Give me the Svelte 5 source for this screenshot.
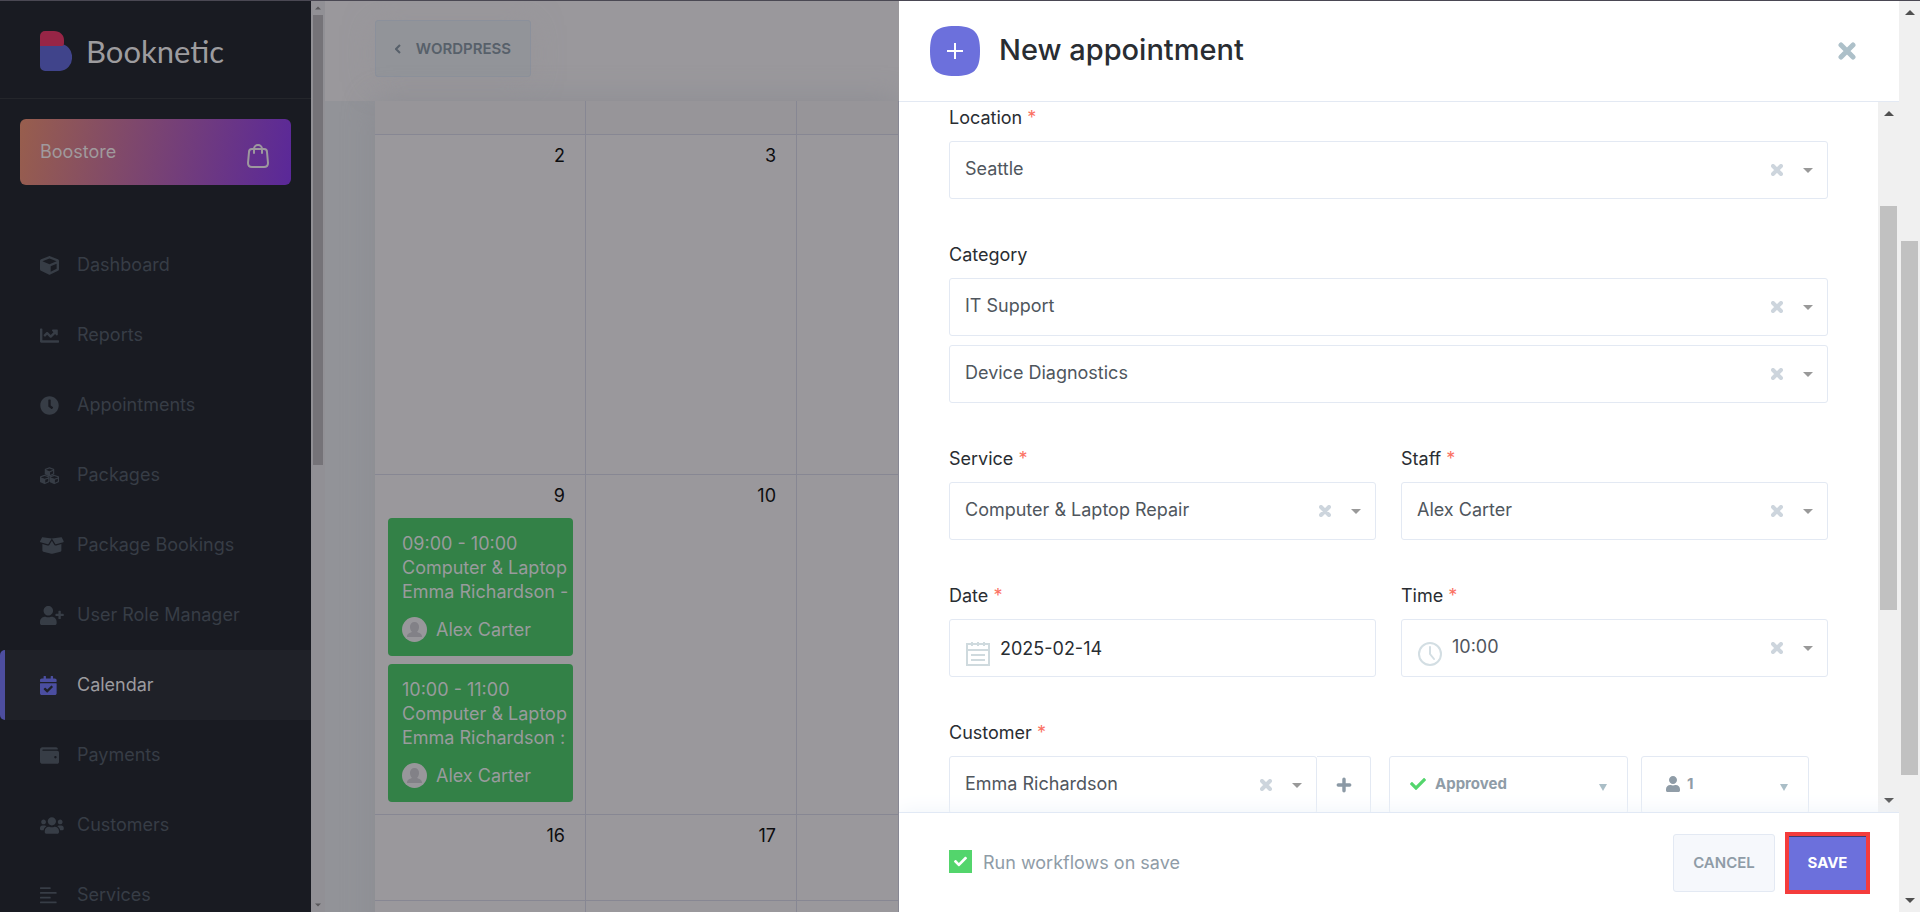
<script lang="ts">
  const cube =
    "M239.1 6.3l-208 78c-18.7 7-31.1 25-31.1 45v225.1c0 18.2 10.3 34.8 26.5 42.9l208 104c13.5 6.8 29.4 6.8 42.9 0l208-104c16.3-8.1 26.5-24.8 26.5-42.9V129.3c0-20-12.4-37.9-31.1-44.9l-208-78C262 2.2 250 2.2 239.1 6.3zM256 68.4l192 72v1.1l-192 78-192-78v-1.1l192-72zm32 356V275.5l160-65v133.9l-160 80z";
  const check =
    "M173.898 439.404l-166.4-166.4c-9.997-9.997-9.997-26.206 0-36.204l36.203-36.204c9.997-9.998 26.207-9.998 36.204 0L192 312.69 432.095 72.596c9.997-9.997 26.207-9.997 36.204 0l36.203 36.204c9.997 9.997 9.997 26.206 0 36.204l-294.4 294.401c-9.998 9.997-26.207 9.997-36.204-.001z";
  const user =
    "M224 256c70.7 0 128-57.3 128-128S294.7 0 224 0 96 57.3 96 128s57.3 128 128 128zm89.6 32h-16.7c-22.2 10.2-46.9 16-72.9 16s-50.6-5.8-72.9-16h-16.7C60.2 288 0 348.2 0 422.4V464c0 26.5 21.5 48 48 48h352c26.5 0 48-21.5 48-48v-41.6c0-74.2-60.2-134.4-134.4-134.4z";

  // sidebar menu, w is the width of the icon's viewBox
  const menu = [
    { label: "Dashboard", w: 512, d: cube },
    {
      label: "Reports",
      w: 512,
      d: "M496 384H64V80c0-8.84-7.16-16-16-16H16C7.16 64 0 71.16 0 80v336c0 17.67 14.33 32 32 32h464c8.84 0 16-7.16 16-16v-32c0-8.84-7.16-16-16-16zM464 96H345.94c-21.38 0-32.09 25.85-16.97 40.97l32.4 32.4L288 242.75l-73.37-73.37c-12.5-12.5-32.76-12.5-45.25 0l-68.69 68.69c-6.25 6.25-6.25 16.38 0 22.63l22.62 22.62c6.25 6.25 16.38 6.25 22.63 0L192 237.25l73.37 73.37c12.5 12.5 32.76 12.5 45.25 0l96-96 32.4 32.4c15.12 15.12 40.97 4.41 40.97-16.97V112c.01-8.84-7.15-16-15.99-16z",
    },
    {
      label: "Appointments",
      w: 512,
      d: "M256,8C119,8,8,119,8,256S119,504,256,504,504,393,504,256,393,8,256,8Zm92.49,313h0l-20,25a16,16,0,0,1-22.49,2.5h0l-67-49.72a40,40,0,0,1-15-31.23V112a16,16,0,0,1,16-16h32a16,16,0,0,1,16,16V256l58,42.5A16,16,0,0,1,348.49,321Z",
    },
    { label: "Packages", w: 512, d: "cubes" },
    {
      label: "Package Bookings",
      w: 640,
      d: "M425.7 256c-16.9 0-32.8-9-41.4-23.4L320 126l-64.2 106.6c-8.7 14.5-24.6 23.5-41.5 23.5-4.5 0-9-.6-13.3-1.9L64 215v178c0 14.7 10 27.5 24.2 31l216.2 54.1c10.2 2.5 20.9 2.5 31 0L551.8 424c14.2-3.6 24.2-16.4 24.2-31V215l-137 39.1c-4.3 1.3-8.8 1.9-13.3 1.9zm212.6-112.2L586.8 41c-3.1-6.2-9.8-9.8-16.7-8.9L320 64l91.7 152.1c3.8 6.3 11.4 9.3 18.5 7.3l197.9-56.5c9.9-2.9 14.7-13.9 10.2-23.1zM53.2 41L1.7 143.8c-4.6 9.2.3 20.2 10.1 23l197.9 56.5c7.1 2 14.7-1 18.5-7.3L320 64 69.8 32.1c-6.9-.8-13.5 2.7-16.6 8.9z",
    },
    {
      label: "User Role Manager",
      w: 640,
      d: "M624 208h-64v-64c0-8.8-7.2-16-16-16h-32c-8.8 0-16 7.2-16 16v64h-64c-8.8 0-16 7.2-16 16v32c0 8.8 7.2 16 16 16h64v64c0 8.8 7.2 16 16 16h32c8.8 0 16-7.2 16-16v-64h64c8.8 0 16-7.2 16-16v-32c0-8.8-7.2-16-16-16z" + user,
    },
    {
      label: "Calendar",
      w: 448,
      d: "M436 160H12c-6.627 0-12-5.373-12-12v-36c0-26.51 21.49-48 48-48h48V12c0-6.627 5.373-12 12-12h40c6.627 0 12 5.373 12 12v52h128V12c0-6.627 5.373-12 12-12h40c6.627 0 12 5.373 12 12v52h48c26.51 0 48 21.49 48 48v36c0 6.627-5.373 12-12 12zM12 192h424c6.627 0 12 5.373 12 12v260c0 26.51-21.49 48-48 48H48c-26.51 0-48-21.49-48-48V204c0-6.627 5.373-12 12-12zm333.296 95.947l-28.169-28.398c-4.667-4.705-12.265-4.736-16.97-.068L194.12 364.665l-45.98-46.352c-4.667-4.705-12.266-4.736-16.971-.068l-28.397 28.17c-4.705 4.667-4.736 12.265-.068 16.97l82.601 83.269c4.667 4.705 12.265 4.736 16.97.068l142.953-141.805c4.705-4.667 4.736-12.265.068-16.97z",
      active: true,
    },
    {
      label: "Payments",
      w: 512,
      d: "M461.2 128H80c-8.84 0-16-7.16-16-16s7.16-16 16-16h384c8.84 0 16-7.16 16-16 0-26.51-21.49-48-48-48H64C28.65 32 0 60.65 0 96v320c0 35.35 28.65 64 64 64h397.2c28.02 0 50.8-21.53 50.8-48V176c0-26.47-22.78-48-50.8-48zM416 336c-17.67 0-32-14.33-32-32s14.33-32 32-32 32 14.33 32 32-14.33 32-32 32z",
    },
    {
      label: "Customers",
      w: 640,
      d: "M96 224c35.3 0 64-28.7 64-64s-28.7-64-64-64-64 28.7-64 64 28.7 64 64 64zm448 0c35.3 0 64-28.7 64-64s-28.7-64-64-64-64 28.7-64 64 28.7 64 64 64zm32 32h-64c-17.6 0-33.5 7.1-45.1 18.6 40.3 22.1 68.9 62 75.1 109.4h66c17.7 0 32-14.3 32-32v-32c0-35.3-28.7-64-64-64zm-256 0c61.9 0 112-50.1 112-112S381.9 32 320 32 208 82.1 208 144s50.1 112 112 112zm76.8 32h-8.3c-20.8 10-43.9 16-68.5 16s-47.6-6-68.5-16h-8.3C179.6 288 128 339.6 128 403.2V432c0 26.5 21.5 48 48 48h288c26.5 0 48-21.5 48-48v-28.8c0-63.6-51.6-115.2-115.2-115.2zm-223.7-13.4C161.5 263.1 145.6 256 128 256H64c-35.3 0-64 28.7-64 64v32c0 17.7 14.3 32 32 32h65.9c6.3-47.4 34.9-87.3 75.2-109.4z",
    },
    {
      label: "Services",
      w: 448,
      d: "M16 32h256q16 0 16 16v16q0 16-16 16H16q-16 0-16-16V48q0-16 16-16zM16 160h416q16 0 16 16v16q0 16-16 16H16q-16 0-16-16v-16q0-16 16-16zM16 288h256q16 0 16 16v16q0 16-16 16H16q-16 0-16-16v-16q0-16 16-16zM16 416h416q16 0 16 16v16q0 16-16 16H16q-16 0-16-16v-16q0-16 16-16z",
    },
  ];

  const events = [
    { time: "09:00 - 10:00", service: "Computer & Laptop", customer: "Emma Richardson -", staff: "Alex Carter" },
    { time: "10:00 - 11:00", service: "Computer & Laptop", customer: "Emma Richardson :", staff: "Alex Carter" },
  ];

  const weeks = [
    { days: ["2", "3", ""], size: "tall" },
    { days: ["9", "10", ""], size: "tall" },
    { days: ["16", "17", ""], size: "short" },
    { days: ["", "", ""], size: "rest" },
  ];

  let runWorkflows = true;
</script>

{#snippet picker(id: string, value: string, clock = false)}
  <div class="field">
    {#if clock}
      <svg class="field-icon" viewBox="0 0 24 24" fill="none" stroke="#d3dee3" stroke-width="2">
        <circle cx="12" cy="12" r="11" />
        <path d="M12 5v7l4 5" stroke-linecap="round" />
      </svg>
    {/if}
    <select {id} class:with-icon={clock}><option>{value}</option></select>
    <button class="clear" type="button" aria-label="Clear">
      <svg viewBox="0 0 12 12" stroke="#cdd5dd" stroke-width="4" stroke-linecap="round"><path d="M2 2l8 8m0-8l-8 8" /></svg>
    </button>
    <svg class="caret" viewBox="0 0 10 5"><path d="M0 0h10l-5 5z" fill="#999" /></svg>
  </div>
{/snippet}

{#snippet scrollbar(kind: string)}
  <div class="scrollbar {kind}" aria-hidden="true">
    <svg viewBox="0 0 10 5"><path d="M0 5l5-5 5 5z" /></svg>
    <div class="track"><div class="thumb"></div></div>
    <svg viewBox="0 0 10 5"><path d="M0 0l5 5 5-5z" /></svg>
  </div>
{/snippet}

<div class="page">
  <aside class="sidebar">
    <div class="brand">
      <svg class="logo" viewBox="0 0 32 40">
        <path d="M0 13h20a12 12.500 0 0 1 12 13.500A12.500 13 0 0 1 20 40H5a5 5 0 0 1-5-5z" fill="#40448b" />
        <path d="M5 0h9c6 0 10 4 10 9v3q0 3-2 3H0V5a5 5 0 0 1 5-5z" fill="#972546" />
      </svg>
      <span>Booknetic</span>
    </div>
    <a class="boostore" href="#boostore">
      Boostore
      <svg viewBox="0 0 22 24" fill="none" stroke="#9d989e" stroke-width="2">
        <path d="M5 5h12q3 0 3 3l1 11q0 4-4 4H5q-4 0-4-4L2 8q0-3 3-3z" />
        <path d="M7 9V5a4 4 0 0 1 8 0v4" stroke-linecap="round" />
      </svg>
    </a>
    <nav>
      {#each menu as item}
        <a class="item" class:active={item.active} href="#{item.label}">
          <span class="icon">
            <svg viewBox="0 0 {item.w} 512" height="19" fill="currentColor">
              {#if item.d === "cubes"}
                <g transform="translate(128 32) scale(.5)"><path d={cube} /></g>
                <g transform="translate(-2 236) scale(.5)"><path d={cube} /></g>
                <g transform="translate(258 236) scale(.5)"><path d={cube} /></g>
              {:else}
                <path d={item.d} />
              {/if}
            </svg>
          </span>
          {item.label}
        </a>
      {/each}
    </nav>
  </aside>
  {@render scrollbar("dim")}

  <main>
    <header class="topbar">
      <button type="button" class="back">
        <svg viewBox="0 0 6 10" fill="none" stroke="currentColor" stroke-width="2"><path d="M5 1L1 5l4 4" /></svg>
        WORDPRESS
      </button>
    </header>
    <div class="calendar">
      <div class="week head"><div></div><div></div><div></div></div>
      {#each weeks as week}
        <div class="week {week.size}">
          {#each week.days as day}
            <div class="day">
              <span class="num">{day}</span>
              {#if day === "9"}
                {#each events as ev}
                  <div class="event">
                    <div>{ev.time}</div>
                    <div>{ev.service}</div>
                    <div>{ev.customer}</div>
                    <div class="staff">
                      <svg viewBox="0 0 25 25">
                        <circle cx="12.500" cy="12.500" r="12.500" fill="#98979b" />
                        <path d="M12.500 5a4.500 4.500 0 0 1 4.500 5c0 2-1 4-2 5 2 1 5 1 5 5H5c0-4 3-4 5-5-1-1-2-3-2-5a4.500 4.500 0 0 1 4.500-5z" fill="#828187" />
                      </svg>
                      {ev.staff}
                    </div>
                  </div>
                {/each}
              {/if}
            </div>
          {/each}
        </div>
      {/each}
    </div>
  </main>

  <section class="panel">
    <header class="panel-head">
      <svg class="badge" viewBox="0 0 50 50">
        <path d="M25 0C44 0 50 6 50 25S44 50 25 50 0 44 0 25 6 0 25 0z" fill="#6c70dc" />
        <path d="M25 17v16M17 25h16" stroke="#fff" stroke-width="2" />
      </svg>
      <h1>New appointment</h1>
      <button class="close" type="button" aria-label="Close">
        <svg viewBox="0 0 18 18" stroke="#adc0c9" stroke-width="5" stroke-linecap="round"><path d="M3 3l12 12m0-12L3 15" /></svg>
      </button>
    </header>

    <div class="panel-body">
      <form>
        <div class="group">
          <label for="location">Location <i>*</i></label>
          {@render picker("location", "Seattle")}
        </div>
        <div class="group">
          <label for="category">Category</label>
          {@render picker("category", "IT Support")}
          {@render picker("subcategory", "Device Diagnostics")}
        </div>
        <div class="pair">
          <div class="group">
            <label for="service">Service <i>*</i></label>
            {@render picker("service", "Computer & Laptop Repair")}
          </div>
          <div class="group">
            <label for="staff">Staff <i>*</i></label>
            {@render picker("staff", "Alex Carter")}
          </div>
        </div>
        <div class="pair">
          <div class="group">
            <label for="date">Date <i>*</i></label>
            <div class="field">
              <svg class="field-icon" viewBox="0 0 24 24" fill="none" stroke="#cfdade" stroke-width="2">
                <path d="M1 2h22v21H1zM1 8h22M5 13h14M5 18h14M6 0v4M12 0v4M18 0v4" />
              </svg>
              <input id="date" type="text" value="2025-02-14" />
            </div>
          </div>
          <div class="group">
            <label for="time">Time <i>*</i></label>
            {@render picker("time", "10:00", true)}
          </div>
        </div>
        <div class="group">
          <label for="customer">Customer <i>*</i></label>
          <div class="customer">
            <div class="joined">
              {@render picker("customer", "Emma Richardson")}
              <button class="add" type="button" aria-label="Add customer">
                <svg viewBox="0 0 14 14" stroke="#8b99a5" stroke-width="3" stroke-linecap="round"><path d="M7 2v10M2 7h10" /></svg>
              </button>
            </div>
            <div class="field small">
              <svg class="lead" viewBox="0 0 512 512" fill="#53d56c"><path d={check} /></svg>
              <select aria-label="Status"><option>Approved</option></select>
              <svg class="arrow" viewBox="0 0 8 7"><path d="M0 0h8L4 7z" fill="#aabec7" /></svg>
            </div>
            <div class="field small people">
              <svg class="lead" viewBox="0 0 448 512" fill="#8f9ca7"><path d={user} /></svg>
              <select aria-label="People"><option>1</option></select>
              <svg class="arrow" viewBox="0 0 8 7"><path d="M0 0h8L4 7z" fill="#aabec7" /></svg>
            </div>
          </div>
        </div>
      </form>
      {@render scrollbar("inner")}
    </div>

    <footer>
      <label class="workflows">
        <input type="checkbox" bind:checked={runWorkflows} />
        <span class="box"><svg viewBox="0 0 512 512" fill="#fff"><path d={check} /></svg></span>
        Run workflows on save
      </label>
      <button type="button" class="cancel">CANCEL</button>
      <span class="highlight"><button type="button" class="save">SAVE</button></span>
    </footer>
  </section>
  {@render scrollbar("outer")}
</div>

<style>
  :global(body) {
    margin: 0;
  }

  .page,
  .page * {
    box-sizing: border-box;
  }

  .page {
    display: flex;
    height: 100vh;
    overflow: hidden;
    border-top: 1px solid #4a4853;
    background: #929398;
    font-family: Inter, sans-serif;
    font-size: 18px;
    line-height: 24px;
  }

  button,
  input,
  select {
    font: inherit;
    color: inherit;
    margin: 0;
  }

  button {
    display: flex;
    align-items: center;
    justify-content: center;
    padding: 0;
    border: 0;
    background: none;
  }

  svg {
    display: block;
    flex: none;
  }

  /* sidebar */
  .sidebar {
    flex: none;
    width: 311px;
    overflow: hidden;
    background: #191b22;
  }

  .brand {
    display: flex;
    align-items: center;
    gap: 14px;
    height: 98px;
    padding: 2px 40px 0;
    border-bottom: 1px solid #24262b;
    font-family: Lato, sans-serif;
    font-size: 31px;
    color: #9d9c9f;
  }

  .logo {
    width: 32px;
    height: 40px;
  }

  .boostore {
    display: flex;
    justify-content: space-between;
    align-items: center;
    height: 66px;
    margin: 20px 20px 45px;
    padding: 0 22px 0 20px;
    border-radius: 6px;
    background: linear-gradient(100deg, #985e4d, #5a2899);
    color: #a09a9d;
    text-decoration: none;
  }

  .boostore svg {
    width: 22px;
    height: 24px;
    margin-top: 8px;
  }

  .item {
    display: flex;
    align-items: center;
    height: 70px;
    padding-left: 40px;
    color: #373d46;
    text-decoration: none;
  }

  .icon {
    width: 37px;
  }

  .active {
    padding-left: 35px;
    border-left: 5px solid #4d4e9f;
    border-radius: 5px 0 0 5px;
    background: #1f2128;
    color: #9c9b9f;
  }

  .active .icon {
    color: #4b4ea0;
  }

  /* scrollbars */
  .scrollbar {
    display: flex;
    flex-direction: column;
    align-items: center;
    flex: none;
    width: 21px;
    padding: 9px 2px;
    background: #f0f0f0;
    fill: #505050;
  }

  .scrollbar svg {
    width: 10px;
    height: 5px;
  }

  .track {
    display: flex;
    flex-direction: column;
    flex: 1;
    align-self: stretch;
  }

  .track::after {
    content: "";
    flex: 1;
  }

  .thumb {
    background: #c1c1c1;
  }

  .dim {
    width: 14px;
    padding: 5px 2px;
    background: #919095;
    fill: #59585c;
  }

  .dim svg {
    width: 6px;
    height: 4px;
  }

  .dim .track {
    padding-top: 5px;
  }

  .dim .thumb {
    flex: 449 0 0;
    background: #757378;
  }

  .dim .track::after {
    flex: 438 0 0;
  }

  .inner .track {
    padding-top: 90px;
  }

  .inner .thumb {
    flex: 404 0 0;
  }

  .inner .track::after {
    flex: 188 0 0;
  }

  .outer .track {
    padding-top: 226px;
  }

  .outer .thumb {
    flex: 534 0 0;
  }

  .outer .track::after {
    flex: 123 0 0;
  }

  /* calendar behind the panel */
  main {
    display: flex;
    flex-direction: column;
    flex: 1;
    min-width: 0;
    overflow: hidden;
  }

  .topbar {
    flex: none;
    height: 100px;
    padding: 19px 50px;
    background: #9a989c;
  }

  .back {
    gap: 15px;
    width: 156px;
    height: 57px;
    border: 1px solid #8b909b;
    border-radius: 3px;
    background: #929499;
    box-shadow: 0 5px 30px #94939890;
    color: #57606a;
    font-size: 15px;
    font-weight: 600;
  }

  .back svg {
    width: 6px;
    height: 10px;
  }

  .calendar {
    display: flex;
    flex-direction: column;
    flex: 1;
    margin-left: 50px;
    background: #9a989c;
    box-shadow: 0 0 30px #8b8c92;
  }

  .week {
    display: grid;
    grid-template-columns: 211px 211px 1fr;
    flex: none;
    border-bottom: 1px solid #878793;
  }

  .week > div {
    min-width: 0;
    border-right: 1px solid #878793;
  }

  .head {
    height: 34px;
    background: #979599;
  }

  .tall {
    height: 340px;
  }

  .short {
    height: 86px;
  }

  .rest {
    flex: 1;
  }

  .day {
    padding: 9px 12px 0 13px;
  }

  .num {
    display: block;
    height: 24px;
    margin: 0 8px 10px 0;
    text-align: right;
    color: #0d0d0f;
  }

  .event {
    height: 138px;
    margin-bottom: 8px;
    padding: 14px 0 0 14px;
    border-radius: 4px;
    background: #338147;
    color: #999b9d;
    white-space: nowrap;
  }

  .staff {
    display: flex;
    align-items: center;
    gap: 9px;
    margin-top: 13px;
  }

  .staff svg {
    width: 25px;
    height: 25px;
  }

  /* appointment panel */
  .panel {
    display: flex;
    flex-direction: column;
    flex: none;
    width: 1000px;
    max-width: 60%;
    overflow: hidden;
    background: #fff;
    color: #292d32;
  }

  .panel-head {
    display: flex;
    align-items: center;
    flex: none;
    gap: 19px;
    height: 101px;
    padding: 0 43px 0 31px;
    border-bottom: 1px solid #e3e9f3;
  }

  .badge {
    width: 50px;
    height: 50px;
  }

  h1 {
    flex: 1;
    margin: 0;
    padding-bottom: 2px;
    font-size: 29px;
    font-weight: 500;
    line-height: 36px;
  }

  .close svg {
    width: 18px;
    height: 18px;
  }

  .panel-body {
    display: flex;
    flex: 1;
    min-height: 0;
    overflow: hidden;
  }

  form {
    flex: 1;
    min-width: 0;
    padding: 2px 50px 0;
  }

  .group {
    display: flex;
    flex-direction: column;
    gap: 9px;
    margin-bottom: 42px;
  }

  .group label {
    line-height: 28px;
  }

  i {
    font-style: normal;
    color: #fb7163;
  }

  .pair {
    display: grid;
    grid-template-columns: 1fr 1fr;
    gap: 25px;
  }

  /* the select fills the box, the icons share its grid row */
  .field {
    display: grid;
    grid-template-columns: auto 1fr auto auto;
    align-items: center;
    height: 58px;
    border: 1px solid #e3e9f3;
    border-radius: 3px;
  }

  .field select,
  .field input {
    grid-area: 1 / 1 / 2 / -1;
    width: 100%;
    height: 56px;
    padding: 0 80px 3px 15px;
    border: 0;
    background: none;
    appearance: none;
    color: #4f565d;
  }

  .field input {
    padding: 0 15px 0 50px;
    color: #292d32;
  }

  .field .with-icon {
    padding-left: 50px;
  }

  .field-icon {
    grid-area: 1 / 1;
    width: 24px;
    height: 24px;
    margin: 12px 0 0 16px;
  }

  .clear {
    grid-area: 1 / 3;
  }

  .clear svg {
    width: 12px;
    height: 12px;
  }

  .caret {
    grid-area: 1 / 4;
    width: 10px;
    height: 5px;
    margin: 0 14px 0 20px;
  }

  .customer {
    display: grid;
    grid-template-columns: 427fr 239fr 168fr;
    column-gap: 13px;
    padding-right: 19px;
  }

  .joined {
    display: grid;
    grid-template-columns: 1fr 54px;
    padding-right: 5px;
  }

  .add {
    border: 1px solid #e3e9f3;
    border-left: 0;
    border-radius: 0 3px 3px 0;
  }

  .add svg {
    width: 16px;
    height: 16px;
  }

  .field.small {
    font-weight: 700;
    font-size: 15px;
  }

  .field.small select {
    padding: 0 40px 2px 45px;
    color: #8f9ca7;
  }

  .lead {
    grid-area: 1 / 1;
    width: 16px;
    height: 16px;
    margin: 0 0 2px 20px;
  }

  .people .lead {
    margin-left: 23px;
  }

  .arrow {
    grid-area: 1 / 4;
    width: 8px;
    height: 7px;
    margin: 4px 20px 0 0;
  }

  footer {
    display: flex;
    align-items: center;
    flex: none;
    height: 100px;
    padding: 0 29px 0 50px;
    border-top: 1px solid #e1e9f5;
    box-shadow: 0 0 20px #eef3f9;
    z-index: 1;
    background: #fff;
  }

  .workflows {
    display: flex;
    align-items: center;
    gap: 11px;
    margin-right: auto;
    color: #8f9ca7;
  }

  .workflows input {
    position: absolute;
    opacity: 0;
  }

  .box {
    display: flex;
    align-items: center;
    justify-content: center;
    width: 23px;
    height: 23px;
    margin-bottom: 3px;
    background: #cdd5dd;
  }

  .workflows input:checked + .box {
    background: #53d56c;
  }

  .box svg {
    width: 13px;
    height: 13px;
  }

  .cancel,
  .save {
    font-size: 15px;
    font-weight: 600;
  }

  .cancel {
    width: 102px;
    height: 58px;
    margin-right: 10px;
    border: 1px solid #e3e9f3;
    border-radius: 3px;
    background: #f6f8fc;
    color: #8f9ca7;
  }

  .highlight {
    border: 4px solid #f43c3c;
  }

  .save {
    width: 77px;
    height: 54px;
    border-top: 1px solid #3b3b72;
    background: #6c70dc;
    color: #fff;
    font-weight: 700;
  }
</style>
